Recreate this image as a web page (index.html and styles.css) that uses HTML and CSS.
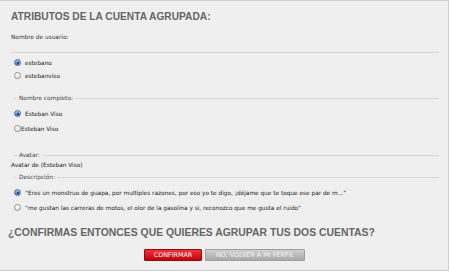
FILE: index.html
```html
<!DOCTYPE html>
<html lang="es">
<head>
    <meta charset="UTF-8">
    <title>Atributos de la cuenta agrupada</title>
    <link rel="stylesheet" href="styles.css">
</head>
<body>
    <div class="panel">
        <h1 class="title">ATRIBUTOS DE LA CUENTA AGRUPADA:</h1>

        <div class="field-label">Nombre de usuario:</div>
        <div class="separator"></div>
        <div class="options options-tight">
            <label class="option"><span class="radio checked"></span>estebano</label>
            <label class="option"><span class="radio"></span>estebanviso</label>
        </div>

        <fieldset class="group group-name">
            <legend>Nombre completo:</legend>
            <div class="options">
                <label class="option"><span class="radio checked"></span>Esteban Viso</label>
                <label class="option option-nogap"><span class="radio"></span>Esteban Viso</label>
            </div>
        </fieldset>

        <fieldset class="group group-avatar">
            <legend>Avatar:</legend>
            <div class="avatar-text">Avatar de (Esteban Viso)</div>
        </fieldset>

        <fieldset class="group group-desc">
            <legend>Descripción:</legend>
            <div class="options">
                <label class="option"><span class="radio checked"></span>“Eres un monstruo de guapa, por multiples razones, por eso yo te digo, ¡déjame que te toque ese par de m...”</label>
                <label class="option"><span class="radio"></span>“me gustan las carreras de motos, el olor de la gasolina y si, reconozco que me gusta el ruido”</label>
            </div>
        </fieldset>

        <h2 class="question">¿CONFIRMAS ENTONCES QUE QUIERES AGRUPAR TUS DOS CUENTAS?</h2>

        <div class="actions">
            <button class="btn btn-confirm">CONFIRMAR</button>
            <button class="btn btn-back">NO, VOLVER A MI PERFIL</button>
        </div>
    </div>
</body>
</html>
```

FILE: styles.css
```css
body {
    margin: 0;
    background-color: #ffffff;
    font-family: "DejaVu Sans", Verdana, sans-serif;
}
.panel {
    box-sizing: border-box;
    width: 449px;
    height: 271px;
    padding: 10px 9px 0 10px;
    background-color: #efefef;
    border: 1px solid #cfcfcf;
    border-left: none;
    color: #444;
}
.title {
    margin: 0 0 0 1px;
    height: 12px;
    font-family: "Liberation Sans", Arial, sans-serif;
    font-size: 10.2px;
    line-height: 12px;
    font-weight: bold;
    color: #666;
}
.field-label {
    margin: 10px 0 0 1px;
    font-size: 5.8px;
    line-height: 8px;
    color: #333;
}
.separator {
    margin-top: 11px;
    border-top: 1px solid #d6d6d6;
}
.options {
    display: flex;
    flex-direction: column;
}
.options-tight {
    margin-top: 3px;
}
.options-tight .option {
    height: 13px;
}
.option {
    display: flex;
    align-items: center;
    gap: 4px;
    height: 15px;
    padding-left: 4px;
    font-size: 5.8px;
    color: #222;
}
.option-nogap {
    gap: 0;
}
.radio {
    box-sizing: border-box;
    width: 7px;
    height: 7px;
    border-radius: 50%;
    border: 1px solid #8e8e8e;
    background: linear-gradient(#ffffff, #e4e4e4);
    flex-shrink: 0;
    position: relative;
}
.radio.checked {
    border-color: #4f6f99;
    background: linear-gradient(#9cc3ef, #3f7fd0);
}
.radio.checked::after {
    content: "";
    position: absolute;
    left: 1.5px;
    top: 1.5px;
    width: 2px;
    height: 2px;
    border-radius: 50%;
    background-color: #1d2a3a;
}
.group {
    margin: 0 0 0 3px;
    padding: 0;
    border: none;
    border-top: 1px solid #d6d6d6;
    min-width: 0;
}
.group legend {
    margin-left: 4px;
    padding: 0 2px;
    font-size: 5.8px;
    line-height: 8px;
    color: #444;
}
.group .options {
    margin-top: 4px;
    margin-left: -3px;
}
.group-name {
    margin-top: 12px;
}
.group-avatar {
    margin-top: 15px;
}
.avatar-text {
    margin: 2px 0 0 -2px;
    font-size: 5.8px;
    line-height: 8px;
    color: #222;
}
.group-desc {
    margin-top: 4px;
}
.question {
    margin: 11px 0 0 -2px;
    font-family: "Liberation Sans", Arial, sans-serif;
    font-size: 10.4px;
    line-height: 13px;
    font-weight: bold;
    color: #666;
    white-space: nowrap;
}
.actions {
    display: flex;
    justify-content: center;
    gap: 3px;
    margin-top: 10px;
}
.btn {
    height: 12px;
    padding: 0;
    border: 1px solid;
    border-radius: 1px;
    font-family: "DejaVu Sans", Verdana, sans-serif;
    font-size: 6.4px;
    line-height: 10px;
    cursor: pointer;
}
.btn-confirm {
    width: 58px;
    color: #ffffff;
    background: linear-gradient(#f0323a, #c4000b);
    border-color: #9e0008;
}
.btn-back {
    width: 100px;
    color: #f4f4f4;
    background: linear-gradient(#d0d0d0, #a9a9a9);
    border-color: #a0a0a0;
}
```
